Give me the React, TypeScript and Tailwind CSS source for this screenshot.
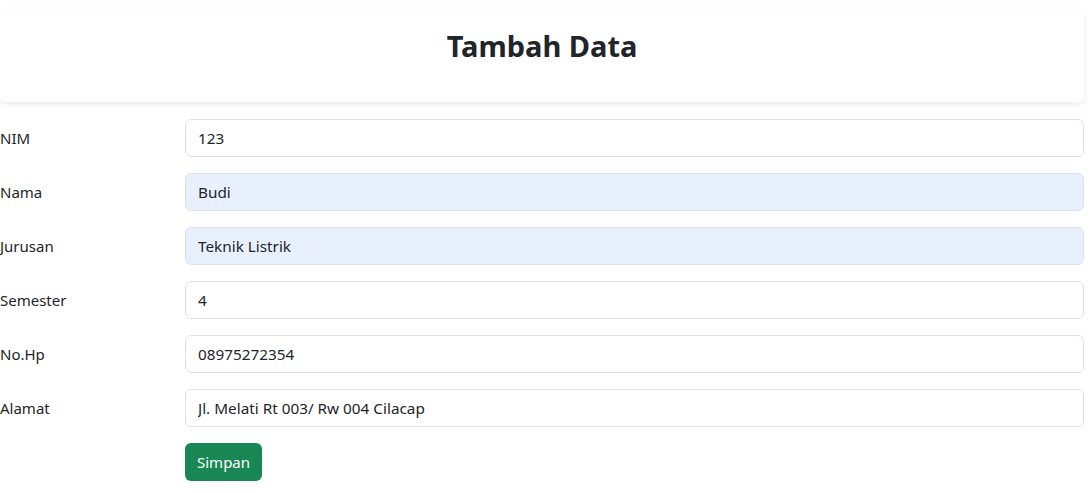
import React from 'react';

const fields = [
  { label: 'NIM', value: '123', filled: false },
  { label: 'Nama', value: 'Budi', filled: true },
  { label: 'Jurusan', value: 'Teknik Listrik', filled: true },
  { label: 'Semester', value: '4', filled: false },
  { label: 'No.Hp', value: '08975272354', filled: false },
  { label: 'Alamat', value: 'Jl. Melati Rt 003/ Rw 004 Cilacap', filled: false },
];

export default function App() {
  return (
    <div
      className="min-h-screen bg-white text-[#212529]"
      style={{ fontFamily: '"Noto Sans", "Open Sans", sans-serif' }}
    >
      <div className="w-[1084px] pt-[9px]">
        <div className="h-[93px] rounded-md bg-white shadow-[0_2px_6px_rgba(0,0,0,0.09)] flex justify-center pt-[19px]">
          <h2 className="text-[29px] leading-[36px] font-bold">Tambah Data</h2>
        </div>

        <form className="mt-[17px] flex flex-col gap-4">
          {fields.map((f) => (
            <div key={f.label} className="flex items-center">
              <label className="w-[185px] shrink-0 text-[15px]">{f.label}</label>
              <input
                readOnly
                value={f.value}
                className={`flex-1 h-[38px] rounded-md border border-[#dee2e6] px-3 text-[15.3px] outline-none ${
                  f.filled ? 'bg-[#e8f0fe]' : 'bg-white'
                }`}
              />
            </div>
          ))}
          <div className="flex">
            <div className="w-[185px] shrink-0" />
            <button
              type="button"
              className="h-[38px] rounded-md bg-[#198754] px-3 text-[15px] text-white"
            >
              Simpan
            </button>
          </div>
        </form>
      </div>
    </div>
  );
}
